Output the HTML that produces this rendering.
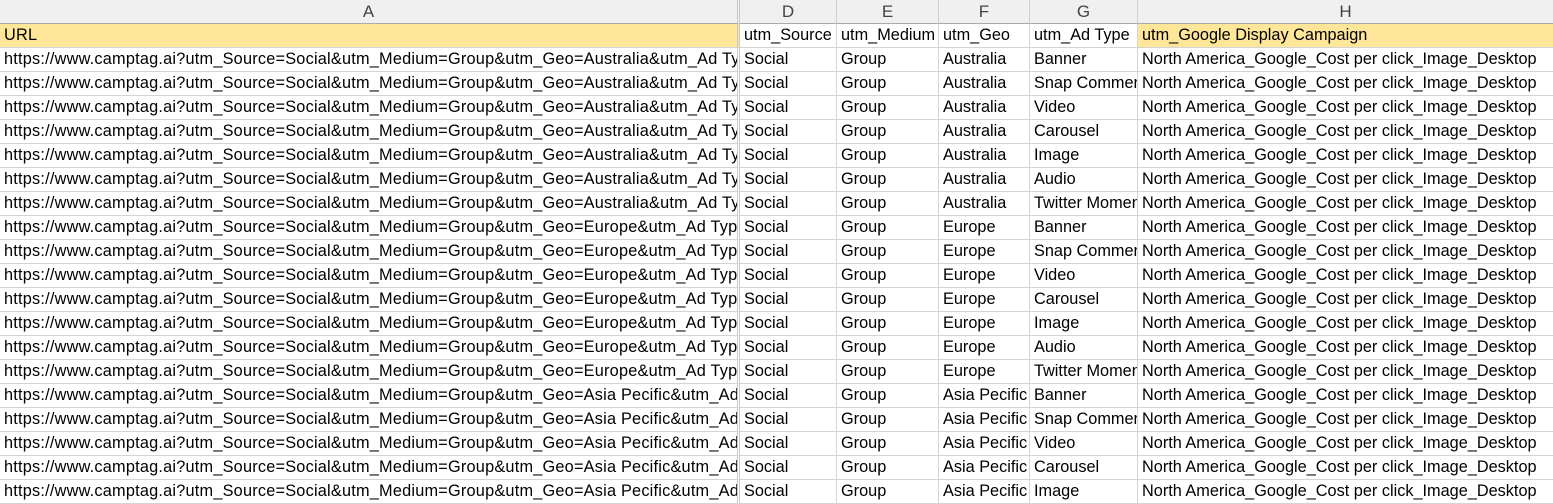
<!DOCTYPE html>
<html><head><meta charset="utf-8"><style>
body{margin:0;width:1553px;height:504px;overflow:hidden;background:#fff;font-family:"Liberation Sans",Arial,sans-serif;font-size:16.3px;color:#000}
.r{display:flex;height:24px}
.r div{box-sizing:border-box;height:24px;padding:0 0 0 4px;border-right:1px solid #d4d4d4;border-bottom:1px solid #d4d4d4;white-space:nowrap;overflow:hidden;line-height:23px;flex:none}
.r div:nth-child(1){width:740px;border-right:3px double #c8c8c8;letter-spacing:0.22px}
.r div:nth-child(2){width:97px}
.r div:nth-child(3){width:102px}
.r div:nth-child(4){width:91px}
.r div:nth-child(5){width:108px}
.r div:nth-child(6){width:415px;border-right:none}
.h div{background:#f0f0f0;color:#444;text-align:center;padding:0;border-bottom:1px solid #ababab;border-right:1px solid #d0d0d0;font-size:17px}
.r.h div:nth-child(1){letter-spacing:0}
.y{background:#ffe699}
</style></head><body>
<div class="r h"><div>A</div><div>D</div><div>E</div><div>F</div><div>G</div><div>H</div></div>
<div class="r"><div class="y">URL</div><div>utm_Source</div><div>utm_Medium</div><div>utm_Geo</div><div>utm_Ad Type</div><div class="y">utm_Google Display Campaign</div></div>
<div class="r"><div>https://www.camptag.ai?utm_Source=Social&amp;utm_Medium=Group&amp;utm_Geo=Australia&amp;utm_Ad Ty</div><div>Social</div><div>Group</div><div>Australia</div><div>Banner</div><div>North America_Google_Cost per click_Image_Desktop</div></div>
<div class="r"><div>https://www.camptag.ai?utm_Source=Social&amp;utm_Medium=Group&amp;utm_Geo=Australia&amp;utm_Ad Ty</div><div>Social</div><div>Group</div><div>Australia</div><div>Snap Commerce</div><div>North America_Google_Cost per click_Image_Desktop</div></div>
<div class="r"><div>https://www.camptag.ai?utm_Source=Social&amp;utm_Medium=Group&amp;utm_Geo=Australia&amp;utm_Ad Ty</div><div>Social</div><div>Group</div><div>Australia</div><div>Video</div><div>North America_Google_Cost per click_Image_Desktop</div></div>
<div class="r"><div>https://www.camptag.ai?utm_Source=Social&amp;utm_Medium=Group&amp;utm_Geo=Australia&amp;utm_Ad Ty</div><div>Social</div><div>Group</div><div>Australia</div><div>Carousel</div><div>North America_Google_Cost per click_Image_Desktop</div></div>
<div class="r"><div>https://www.camptag.ai?utm_Source=Social&amp;utm_Medium=Group&amp;utm_Geo=Australia&amp;utm_Ad Ty</div><div>Social</div><div>Group</div><div>Australia</div><div>Image</div><div>North America_Google_Cost per click_Image_Desktop</div></div>
<div class="r"><div>https://www.camptag.ai?utm_Source=Social&amp;utm_Medium=Group&amp;utm_Geo=Australia&amp;utm_Ad Ty</div><div>Social</div><div>Group</div><div>Australia</div><div>Audio</div><div>North America_Google_Cost per click_Image_Desktop</div></div>
<div class="r"><div>https://www.camptag.ai?utm_Source=Social&amp;utm_Medium=Group&amp;utm_Geo=Australia&amp;utm_Ad Ty</div><div>Social</div><div>Group</div><div>Australia</div><div>Twitter Moments</div><div>North America_Google_Cost per click_Image_Desktop</div></div>
<div class="r"><div>https://www.camptag.ai?utm_Source=Social&amp;utm_Medium=Group&amp;utm_Geo=Europe&amp;utm_Ad Type</div><div>Social</div><div>Group</div><div>Europe</div><div>Banner</div><div>North America_Google_Cost per click_Image_Desktop</div></div>
<div class="r"><div>https://www.camptag.ai?utm_Source=Social&amp;utm_Medium=Group&amp;utm_Geo=Europe&amp;utm_Ad Type</div><div>Social</div><div>Group</div><div>Europe</div><div>Snap Commerce</div><div>North America_Google_Cost per click_Image_Desktop</div></div>
<div class="r"><div>https://www.camptag.ai?utm_Source=Social&amp;utm_Medium=Group&amp;utm_Geo=Europe&amp;utm_Ad Type</div><div>Social</div><div>Group</div><div>Europe</div><div>Video</div><div>North America_Google_Cost per click_Image_Desktop</div></div>
<div class="r"><div>https://www.camptag.ai?utm_Source=Social&amp;utm_Medium=Group&amp;utm_Geo=Europe&amp;utm_Ad Type</div><div>Social</div><div>Group</div><div>Europe</div><div>Carousel</div><div>North America_Google_Cost per click_Image_Desktop</div></div>
<div class="r"><div>https://www.camptag.ai?utm_Source=Social&amp;utm_Medium=Group&amp;utm_Geo=Europe&amp;utm_Ad Type</div><div>Social</div><div>Group</div><div>Europe</div><div>Image</div><div>North America_Google_Cost per click_Image_Desktop</div></div>
<div class="r"><div>https://www.camptag.ai?utm_Source=Social&amp;utm_Medium=Group&amp;utm_Geo=Europe&amp;utm_Ad Type</div><div>Social</div><div>Group</div><div>Europe</div><div>Audio</div><div>North America_Google_Cost per click_Image_Desktop</div></div>
<div class="r"><div>https://www.camptag.ai?utm_Source=Social&amp;utm_Medium=Group&amp;utm_Geo=Europe&amp;utm_Ad Type</div><div>Social</div><div>Group</div><div>Europe</div><div>Twitter Moments</div><div>North America_Google_Cost per click_Image_Desktop</div></div>
<div class="r"><div>https://www.camptag.ai?utm_Source=Social&amp;utm_Medium=Group&amp;utm_Geo=Asia Pecific&amp;utm_Ad</div><div>Social</div><div>Group</div><div>Asia Pecific</div><div>Banner</div><div>North America_Google_Cost per click_Image_Desktop</div></div>
<div class="r"><div>https://www.camptag.ai?utm_Source=Social&amp;utm_Medium=Group&amp;utm_Geo=Asia Pecific&amp;utm_Ad</div><div>Social</div><div>Group</div><div>Asia Pecific</div><div>Snap Commerce</div><div>North America_Google_Cost per click_Image_Desktop</div></div>
<div class="r"><div>https://www.camptag.ai?utm_Source=Social&amp;utm_Medium=Group&amp;utm_Geo=Asia Pecific&amp;utm_Ad</div><div>Social</div><div>Group</div><div>Asia Pecific</div><div>Video</div><div>North America_Google_Cost per click_Image_Desktop</div></div>
<div class="r"><div>https://www.camptag.ai?utm_Source=Social&amp;utm_Medium=Group&amp;utm_Geo=Asia Pecific&amp;utm_Ad</div><div>Social</div><div>Group</div><div>Asia Pecific</div><div>Carousel</div><div>North America_Google_Cost per click_Image_Desktop</div></div>
<div class="r"><div>https://www.camptag.ai?utm_Source=Social&amp;utm_Medium=Group&amp;utm_Geo=Asia Pecific&amp;utm_Ad</div><div>Social</div><div>Group</div><div>Asia Pecific</div><div>Image</div><div>North America_Google_Cost per click_Image_Desktop</div></div>
</body></html>
